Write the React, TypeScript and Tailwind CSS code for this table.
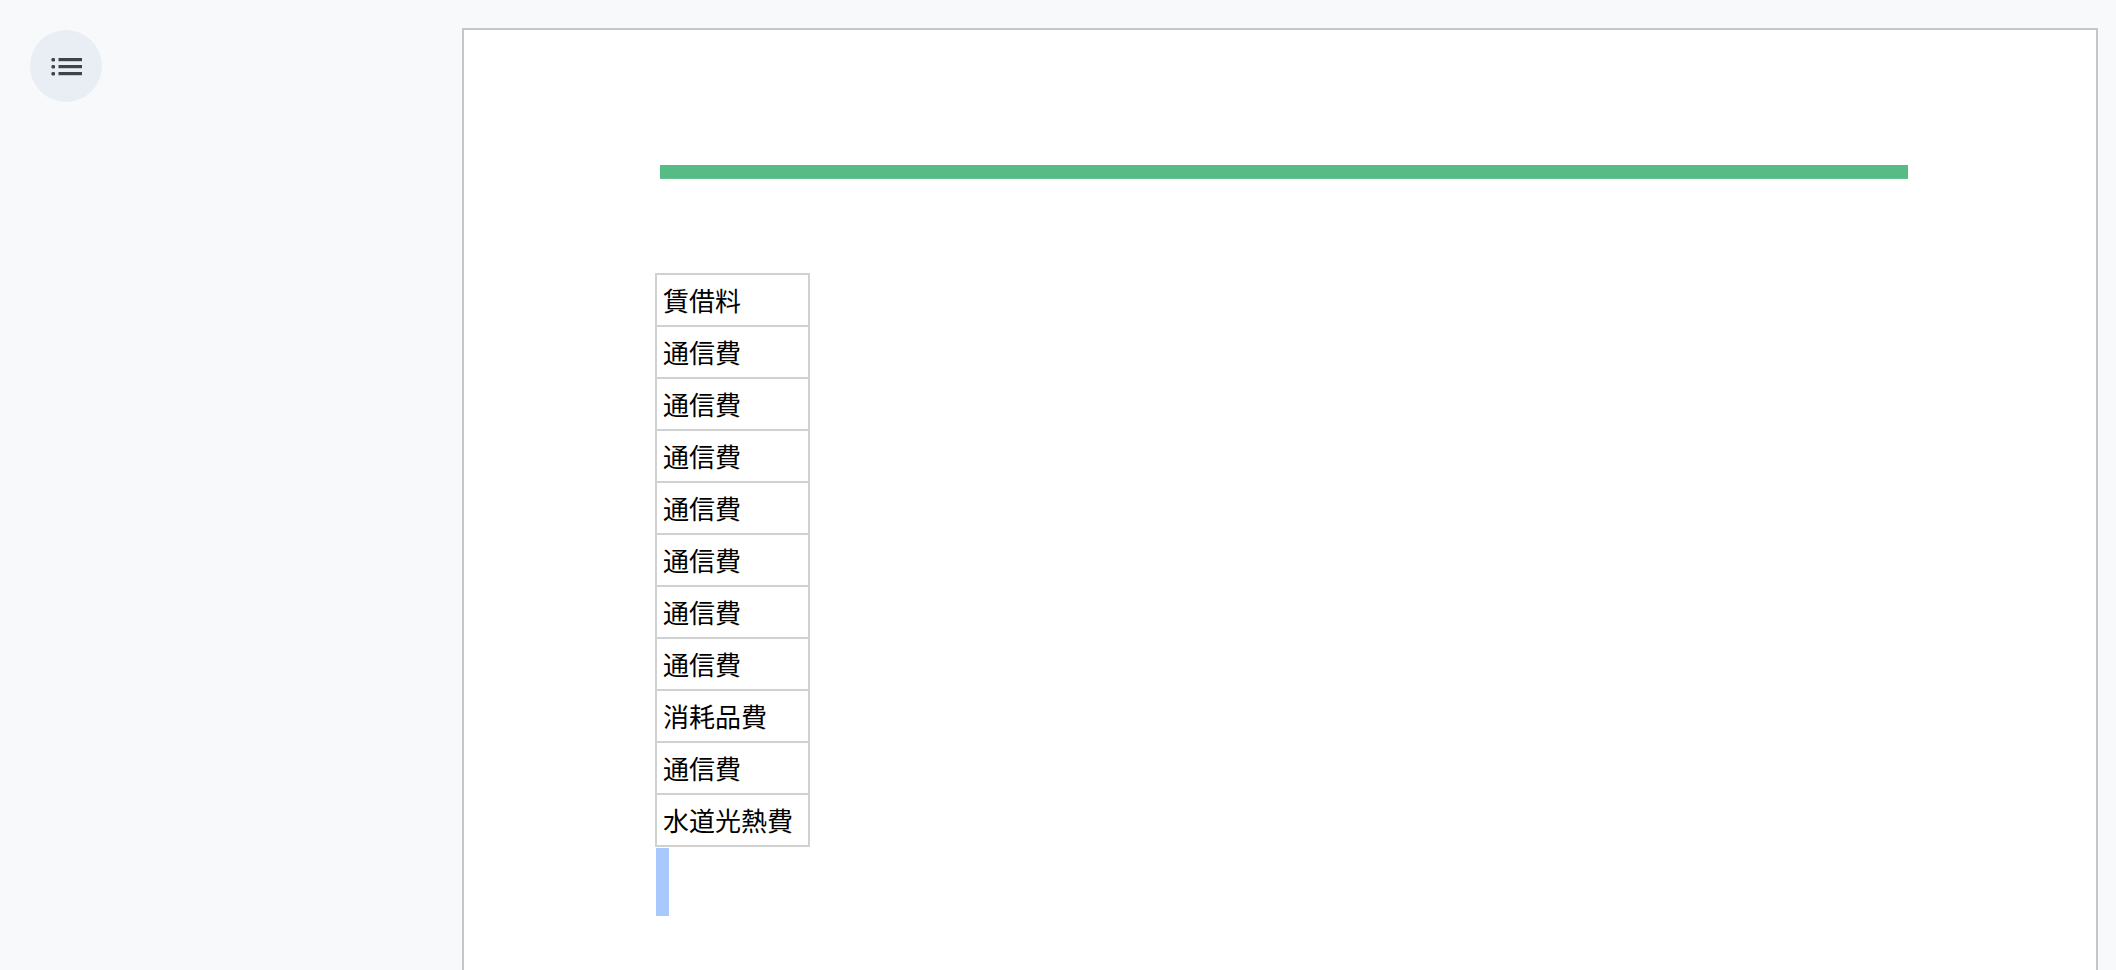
import * as React from 'react';

const rows = [
  '賃借料',
  '通信費',
  '通信費',
  '通信費',
  '通信費',
  '通信費',
  '通信費',
  '通信費',
  '消耗品費',
  '通信費',
  '水道光熱費',
];

function ListIcon() {
  return (
    <svg width="32" height="20" viewBox="0 0 32 20" className="text-[#3f4348]">
      <rect x="0.5" y="0" width="3.5" height="3.5" rx="1.2" fill="currentColor" />
      <rect x="0.5" y="7" width="3.5" height="3.5" rx="1.2" fill="currentColor" />
      <rect x="0.5" y="14" width="3.5" height="3.5" rx="1.2" fill="currentColor" />
      <rect x="7.5" y="0" width="23.5" height="3.2" fill="currentColor" />
      <rect x="7.5" y="7" width="23.5" height="3.2" fill="currentColor" />
      <rect x="7.5" y="14" width="23.5" height="3.2" fill="currentColor" />
    </svg>
  );
}

export default function App() {
  return (
    <div className="flex h-[970px] w-full overflow-hidden bg-[#f8f9fb] font-['Noto_Sans_CJK_JP',sans-serif]">
      <div className="w-[462px] shrink-0 pl-[30px] pt-[30px]">
        <button className="flex h-[72px] w-[72px] items-center justify-center rounded-full bg-[#e9eef4] pl-[2px] pt-[3px]">
          <ListIcon />
        </button>
      </div>
      <div className="mr-[18px] mt-[28px] flex-1 border-2 border-b-0 border-[#c6c6c6] bg-white">
        <div className="ml-[196px] mr-[188px] mt-[135px] h-[14px] border-b border-[#68c394] bg-[#57bb86]" />
        <table className="ml-[191px] mt-[94px] border-collapse text-[26px] leading-[40px] text-black">
          <tbody>
            {rows.map((label, i) => (
              <tr key={i}>
                <td className="h-[52px] w-[153px] border-2 border-[#d0d0d0] pl-[6px] pr-[4px] align-middle whitespace-nowrap">
                  {label}
                </td>
              </tr>
            ))}
          </tbody>
        </table>
        <div className="ml-[192px] mt-[1px] h-[68px] w-[13px] bg-[#a8c9fd]" />
      </div>
    </div>
  );
}
